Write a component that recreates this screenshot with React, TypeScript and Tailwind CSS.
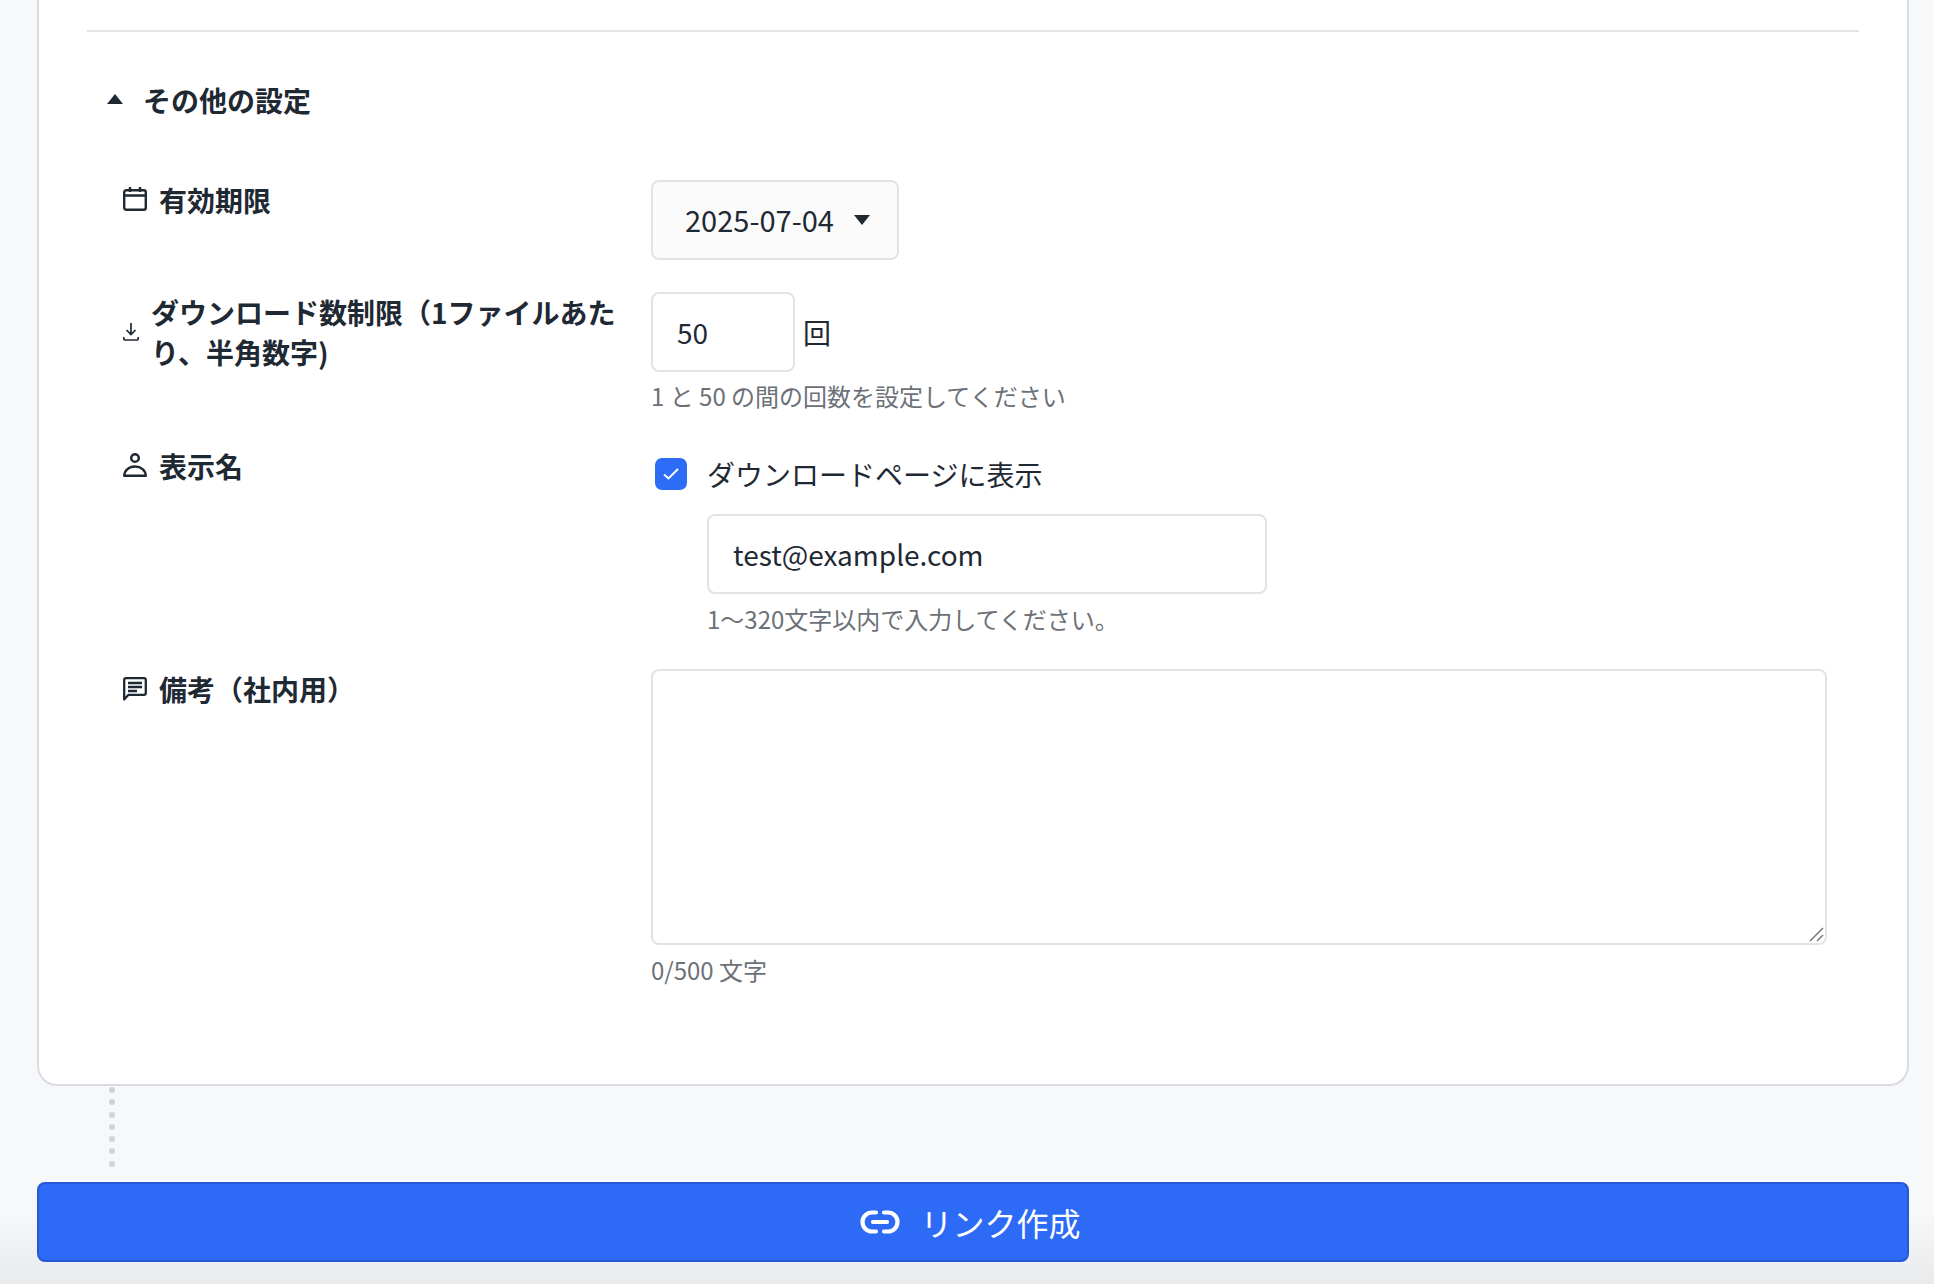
import React from 'react';

const Caret = ({ up }: { up?: boolean }) => (
  <svg width="16" height="10" viewBox="0 0 16 10" className={up ? 'mb-[3px] shrink-0' : 'shrink-0'}>
    <polygon points={up ? '8,0 16,10 0,10' : '0,0 16,0 8,10'} fill="#1f2933" />
  </svg>
);

const CalendarIcon = () => (
  <svg width="24" height="24" viewBox="0 0 24 24" fill="none" stroke="#1f2933" strokeWidth="2.4" className="-mt-[3px] shrink-0">
    <rect x="1.2" y="3.2" width="21.6" height="19.6" rx="2" />
    <path d="M1 8.5H23M7 0V5M17 0V5" />
  </svg>
);

const DownloadIcon = () => (
  <svg width="16" height="18" viewBox="0 0 16 18" fill="none" stroke="#1f2933" strokeWidth="1.7" className="shrink-0">
    <path d="M8 0V11M3.5 7L8 11.5L12.5 7M0.8 14V15.5Q0.8 17 2.3 17H13.7Q15.2 17 15.2 15.5V14" />
  </svg>
);

const PersonIcon = () => (
  <svg width="24" height="24" viewBox="0 0 24 24" fill="none" stroke="#1f2933" strokeWidth="2.5" className="-mt-[3px] shrink-0">
    <circle cx="12" cy="5" r="3.8" />
    <path d="M1.3 22.8C1.3 17.5 6 13.5 12 13.5C18 13.5 22.7 17.5 22.7 22.8Z" strokeLinejoin="round" />
  </svg>
);

const CommentIcon = () => (
  <svg width="24" height="24" viewBox="0 0 24 24" fill="none" stroke="#1f2933" strokeWidth="2.3" className="shrink-0">
    <path d="M1.2 22.5V3Q1.2 1.2 3 1.2H21Q22.8 1.2 22.8 3V16Q22.8 17.8 21 17.8H5.5Z" strokeLinejoin="round" />
    <path d="M5 6H19M5 10H19M5 14H14" />
  </svg>
);

const LinkIcon = () => (
  <svg width="40" height="24" viewBox="0 0 40 24" fill="none" stroke="#ffffff" strokeWidth="4.2" strokeLinecap="round" className="shrink-0">
    <path d="M16 2.5H12A9.5 9.5 0 0 0 12 21.5H16M24 2.5H28A9.5 9.5 0 0 1 28 21.5H24M13 12H27" />
  </svg>
);

const Field = ({ icon, label, gap = 'gap-3', children }: { icon: React.ReactNode; label: string; gap?: string; children: React.ReactNode }) => (
  <div className="flex">
    <div className={`flex w-[528px] shrink-0 items-center self-start pr-[30px] text-[28px] font-bold leading-[40px] ${gap}`}>
      {icon}
      <span>{label}</span>
    </div>
    <div className="min-w-0 flex-1">{children}</div>
  </div>
);

const Hint = ({ children }: { children: React.ReactNode }) => (
  <p className="text-[24px] leading-[36px] text-[#6c7178]">{children}</p>
);

export default function App() {
  return (
    <div className="flex h-[1284px] flex-col overflow-hidden bg-[linear-gradient(to_bottom,#f7f8fa_calc(100%-70px),#e9eaec_100%)] pl-[37px] pr-[25px] font-['Noto_Sans_CJK_JP','Liberation_Sans',sans-serif] text-[#1f2933]">
      {/* settings card, its top is scrolled off */}
      <section className="h-[1086px] shrink-0 rounded-b-[20px] border-x-2 border-b-2 border-[#d9dbe3] bg-white pt-[30px]">
        <div className="mx-[48px] h-[2px] bg-[#e3e5e8]" />

        <div className="ml-[68px] mr-[80px]">
          <button className="mt-[48px] flex items-center gap-[20px] text-[28px] font-bold leading-[40px]">
            <Caret up />
            <span>その他の設定</span>
          </button>

          <div className="ml-[16px] mt-[60px] flex flex-col gap-[33px]">
            <Field icon={<CalendarIcon />} label="有効期限">
              <button className="mb-[-1px] flex h-[80px] w-[248px] items-center justify-between rounded-[8px] border-2 border-[#e3e3e3] bg-[#fbfbfb] pl-[32px] pr-[27px] text-[29px]">
                <span>2025-07-04</span>
                <Caret />
              </button>
            </Field>

            <Field icon={<DownloadIcon />} label="ダウンロード数制限（1ファイルあたり、半角数字)">
              <div className="flex items-center gap-[8px]">
                <input
                  defaultValue="50"
                  className="h-[80px] w-[144px] rounded-[8px] border-2 border-[#e3e3e3] bg-white px-[24px] text-[28px] outline-none"
                />
                <span className="text-[28px]">回</span>
              </div>
              <div className="mt-[6px] h-[35px]">
                <Hint>1 と 50 の間の回数を設定してください</Hint>
              </div>
            </Field>

            <Field icon={<PersonIcon />} label="表示名">
              <label className="flex h-[56px] items-center gap-[20px] pl-[4px] text-[28px]">
                <span className="flex h-[32px] w-[32px] items-center justify-center rounded-[7px] bg-[#2d6cf6]">
                  <svg width="16" height="12" viewBox="0 0 16 12" fill="none" stroke="#ffffff" strokeWidth="2">
                    <path d="M1 6.5L5.5 10.5L15 1" />
                  </svg>
                </span>
                ダウンロードページに表示
              </label>
              <div className="ml-[56px] mt-[12px]">
                <input
                  defaultValue="test@example.com"
                  className="h-[80px] w-[560px] rounded-[8px] border-2 border-[#e3e3e3] bg-white px-[24px] text-[28px] outline-none"
                />
                <div className="mt-[7px] h-[35px]">
                  <Hint>1〜320文字以内で入力してください。</Hint>
                </div>
              </div>
            </Field>

            <Field icon={<CommentIcon />} label="備考（社内用）">
              <div className="relative">
                <textarea className="block h-[276px] w-full resize-none rounded-[8px] border-2 border-[#e3e3e3] bg-white outline-none" />
                {/* resize grip */}
                <svg width="16" height="16" viewBox="0 0 16 16" fill="none" stroke="#777777" strokeWidth="1.5" className="absolute bottom-[3px] right-[3px]">
                  <path d="M2 15L15 2M9 15L15 9" />
                </svg>
              </div>
              <div className="mt-[7px]">
                <Hint>0/500 文字</Hint>
              </div>
            </Field>
          </div>
        </div>
      </section>

      {/* dotted connector */}
      <div className="ml-[72px] mt-[1px] flex w-[6px] flex-col gap-[6.3px]">
        {[0, 1, 2, 3, 4, 5, 6].map((i) => (
          <span key={i} className="h-[6px] w-[6px] rounded-full bg-[#d2d3da]" />
        ))}
      </div>

      <button className="mt-[15px] flex h-[80px] shrink-0 items-center justify-center gap-[20px] rounded-[8px] border-2 border-[#2759d4] bg-[#2d6af6] pr-[5px] text-[32px] text-white">
        <LinkIcon />
        <span>リンク作成</span>
      </button>
    </div>
  );
}
